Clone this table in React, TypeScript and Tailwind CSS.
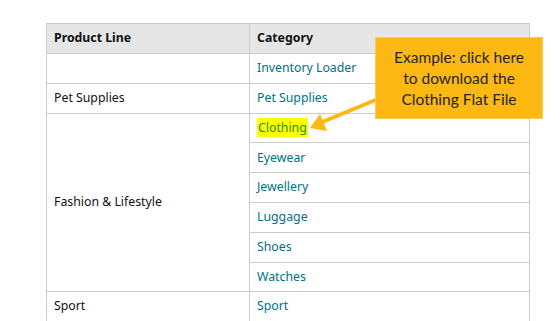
import React from "react";

const rows: { line?: string; span?: number; cat: string; hl?: boolean }[] = [
  { line: "", cat: "Inventory Loader" },
  { line: "Pet Supplies", cat: "Pet Supplies" },
  { line: "Fashion & Lifestyle", span: 6, cat: "Clothing", hl: true },
  { cat: "Eyewear" },
  { cat: "Jewellery" },
  { cat: "Luggage" },
  { cat: "Shoes" },
  { cat: "Watches" },
];

export default function App() {
  return (
    <div
      className="relative w-[560px] h-[321px] overflow-hidden bg-white pl-[46px] pt-[23px]"
      style={{ fontFamily: "'Noto Sans', Lato, sans-serif" }}
    >
      <table className="border-collapse w-[484px] text-[12.3px] text-[#0f1111]">
        <thead>
          <tr className="h-[30px] bg-[#e6e6e6]">
            <th className="w-[203px] border border-[#cccccc] px-[7px] text-left font-bold align-middle">
              Product Line
            </th>
            <th className="border border-[#cccccc] px-[7px] text-left font-bold align-middle">
              Category
            </th>
          </tr>
        </thead>
        <tbody>
          {rows.map((r, i) => (
            <tr key={i} className="h-[29.8px]">
              {r.line !== undefined && (
                <td
                  rowSpan={r.span ?? 1}
                  className="border border-[#cccccc] px-[7px] align-middle"
                >
                  {r.line}
                </td>
              )}
              <td className="border border-[#cccccc] px-[7px] align-middle text-[#007185]">
                {r.hl ? (
                  <span className="bg-[#ffff00] text-[#2b8a22] px-[1px] py-[1px]">
                    {r.cat}
                  </span>
                ) : (
                  r.cat
                )}
              </td>
            </tr>
          ))}
          <tr className="h-[44px]">
            <td className="border border-[#cccccc] px-[7px] pt-[5px] align-top">Sport</td>
            <td className="border border-[#cccccc] px-[7px] pt-[5px] align-top text-[#007185]">
              Sport
            </td>
          </tr>
        </tbody>
      </table>

      {/* arrow from the note to the Clothing link */}
      <svg
        className="absolute left-0 top-0 pointer-events-none"
        width="560"
        height="321"
      >
        <line
          x1="378"
          y1="99"
          x2="321"
          y2="122.5"
          stroke="#fdb813"
          strokeWidth="4"
        />
        <polygon points="310,128 320,114 327,131" fill="#fdb813" />
      </svg>

      <div
        className="absolute left-[375px] top-[37px] w-[168px] h-[82px] bg-[#fdb813] border border-[#ffc94d] flex items-center justify-center text-center text-[15.5px] leading-[21px] text-[#262626]"
        style={{ fontFamily: "Lato, 'Open Sans', sans-serif" }}
      >
        <div>
          Example: click here
          <br />
          to download the
          <br />
          Clothing Flat File
        </div>
      </div>
    </div>
  );
}
